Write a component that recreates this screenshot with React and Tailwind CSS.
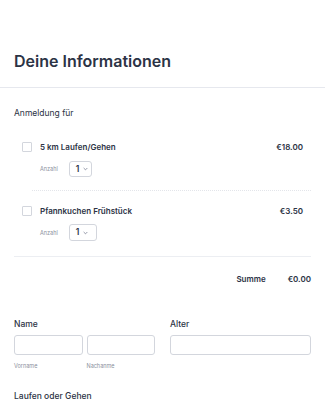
import React from 'react'

function Chevron() {
  return (
    <svg width="5" height="4" viewBox="0 0 6 4" className="text-[#70768a]">
      <path d="M0.8 0.8 L3 3 L5.2 0.8" fill="none" stroke="currentColor" strokeWidth="0.9" />
    </svg>
  )
}

function Item({ name, price, selectW, selectH, selectMt }) {
  return (
    <div>
      <div className="flex items-center justify-between pl-[8px] pr-[8px]">
        <div className="flex items-center">
          <span className="w-[10px] h-[10px] border border-[#d3d6dd] rounded-[1px] bg-white" />
          <span className="ml-[8px] text-[8px] leading-[10px] font-semibold text-[#2c3345]">{name}</span>
        </div>
        <span className="text-[8px] leading-[10px] font-semibold text-[#2c3345]">{price}</span>
      </div>
      <div className="flex items-center pl-[26px]" style={{ marginTop: selectMt }}>
        <span className="text-[5.5px] leading-[8px] text-[#8a8f9c]">Anzahl</span>
        <div
          className="ml-[11px] flex items-center gap-[4px] pl-[6px] border border-[#d3d6dd] rounded-[3px] bg-white"
          style={{ width: selectW, height: selectH }}
        >
          <span className="text-[8.5px] font-semibold text-[#2c3345]">1</span>
          <Chevron />
        </div>
      </div>
    </div>
  )
}

export default function App() {
  return (
    <div className="w-[325px] h-[400px] overflow-hidden bg-white" style={{ fontFamily: 'Inter, "Noto Sans", sans-serif' }}>
      <div className="pt-[51px] pb-[16px] px-[14px] border-b border-[#e6e8ee]">
        <h1 className="text-[16px] leading-[20px] font-semibold text-[#2c3345]">Deine Informationen</h1>
      </div>

      <div className="px-[14px]">
        <p className="mt-[19px] text-[8.5px] leading-[12px] text-[#2c3345]">Anmeldung für</p>

        <div className="mt-[23px]">
          <Item name="5 km Laufen/Gehen" price="€18.00" selectW={23} selectH={16} selectMt={9} />
        </div>
        <div className="mt-[13px] ml-[18px] border-t border-dotted border-[#e3e5ea]" />
        <div className="mt-[15px]">
          <Item name="Pfannkuchen Frühstück" price="€3.50" selectW={28} selectH={17} selectMt={8} />
        </div>
        <div className="mt-[15px] border-t border-[#eceef2]" />

        <div className="mt-[16px] flex justify-end text-[8px] leading-[12px] font-semibold text-[#2c3345]">
          <span>Summe</span>
          <span className="ml-[22px]">€0.00</span>
        </div>

        <div className="mt-[33px] grid grid-cols-2 gap-[15px]">
          <div>
            <p className="text-[8.5px] leading-[12px] font-medium text-[#2c3345]">Name</p>
            <div className="mt-[5px] grid grid-cols-2 gap-[4px]">
              <div>
                <div className="h-[20px] border border-[#d3d6dd] rounded-[3px] bg-white" />
                <p className="mt-[7px] text-[5.5px] leading-[8px] text-[#8a8f9c]">Vorname</p>
              </div>
              <div>
                <div className="h-[20px] border border-[#d3d6dd] rounded-[3px] bg-white" />
                <p className="mt-[7px] text-[5.5px] leading-[8px] text-[#8a8f9c]">Nachanme</p>
              </div>
            </div>
          </div>
          <div>
            <p className="text-[8.5px] leading-[12px] font-medium text-[#2c3345]">Alter</p>
            <div className="mt-[5px] h-[20px] border border-[#d3d6dd] rounded-[3px] bg-white" />
          </div>
        </div>

        <p className="mt-[20px] text-[8.5px] leading-[12px] font-medium text-[#2c3345]">Laufen oder Gehen</p>
      </div>
    </div>
  )
}
